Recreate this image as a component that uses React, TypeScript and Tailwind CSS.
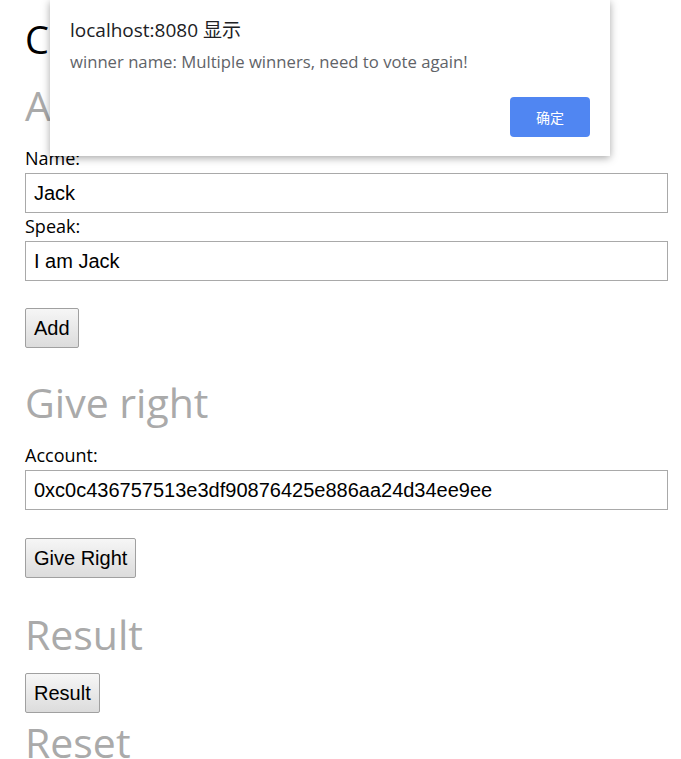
const heading = "font-['Open_Sans',sans-serif] text-[41px] leading-[38px] text-[#aaaaaa]"
const label = "block font-['Open_Sans',sans-serif] text-[18px] leading-[25px] text-black"
const input =
  "block w-full h-[40px] mt-[2px] border border-[#a9a9a9] bg-white px-[8px] font-['Liberation_Sans',Arial,sans-serif] text-[20px] text-black outline-none"
const button =
  "h-[40px] px-[8px] border border-[#a0a0a0] rounded-[2px] bg-gradient-to-b from-[#f6f6f6] to-[#dcdcdc] font-['Liberation_Sans',Arial,sans-serif] text-[20px] text-black"

const AlertDialog = () => (
  <div className="absolute left-[50px] top-0 w-[560px] h-[156px] bg-white shadow-[0_2px_8px_rgba(0,0,0,0.35)] px-[20px] pt-[16px]">
    <p className="font-['Open_Sans','Noto_Sans_CJK_SC',sans-serif] text-[19px] leading-[28px] text-[#202124]">
      localhost:8080 显示
    </p>
    <p className="mt-[6px] font-['Open_Sans',sans-serif] text-[16.7px] leading-[24px] text-[#5f6368]">
      winner name: Multiple winners, need to vote again!
    </p>
    <div className="flex justify-end mt-[23px]">
      <button className="w-[80px] h-[40px] rounded-[4px] bg-[#5086f2] text-white font-['Noto_Sans_CJK_SC',sans-serif] text-[14px]">
        确定
      </button>
    </div>
  </div>
)

export default function App() {
  return (
    <div className="relative min-h-[759px] bg-white pl-[25px] pr-[13px] pt-[20px] overflow-hidden">
      <h1 className="font-['Open_Sans',sans-serif] text-[38px] leading-[38px] text-black">Candidates</h1>

      <h2 className={`${heading} mt-[28px]`}>Add candidate</h2>
      <div className="mt-[22px]">
        <label className={label}>Name:</label>
        <input className={input} defaultValue="Jack" />
        <label className={`${label} mt-[1px]`}>Speak:</label>
        <input className={input} defaultValue="I am Jack" />
        <button className={`${button} mt-[27px]`}>Add</button>
      </div>

      <h2 className={`${heading} mt-[35px]`}>Give right</h2>
      <div className="mt-[22px]">
        <label className={label}>Account:</label>
        <input className={input} defaultValue="0xc0c436757513e3df90876425e886aa24d34ee9ee" />
        <button className={`${button} mt-[28px]`}>Give Right</button>
      </div>

      <h2 className={`${heading} mt-[37px]`}>Result</h2>
      <button className={`${button} mt-[20px]`}>Result</button>

      <h2 className={`${heading} mt-[10px]`}>Reset</h2>

      <AlertDialog />
    </div>
  )
}
